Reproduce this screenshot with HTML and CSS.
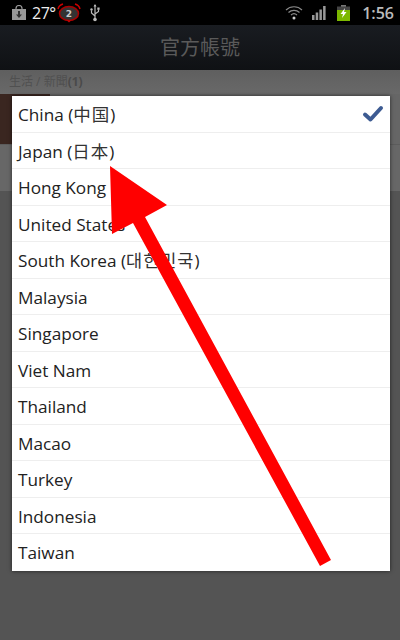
FILE: index.html
```html
<!DOCTYPE html>
<html lang="en">
<head>
    <meta charset="UTF-8">
    <meta name="viewport" content="width=device-width, initial-scale=1.0">
    <title>官方帳號</title>
    <link rel="stylesheet" href="styles.css">
</head>
<body>
    <div class="status-bar">
        <div class="status-left">
            <svg class="icon-bag" width="14" height="15" viewBox="0 0 14 15">
                <path d="M4 5V3.500a3 3 0 0 1 6 0V5" fill="none" stroke="#999" stroke-width="1.200"/>
                <rect x="0" y="4" width="14" height="11" fill="#999"/>
                <path d="M6 6h2v3.500h2L7 13 4 9.500h2z" fill="#333"/>
            </svg>
            <span class="temp">27°</span>
            <svg class="icon-alarm" width="24" height="20" viewBox="0 0 24 20">
                <path d="M1 6a7 7 0 0 1 5-5M23 6a7 7 0 0 0-5-5" fill="none" stroke="#c00" stroke-width="1.500"/>
                <ellipse cx="12" cy="10.500" rx="9.500" ry="7" fill="#333" stroke="#a00" stroke-width="1.500"/>
                <path d="M10 17.500h4l-2 2z" fill="#c00"/>
                <text x="12" y="14" class="alarm-num">2</text>
            </svg>
            <svg class="icon-usb" width="10" height="18" viewBox="0 0 10 18">
                <path d="M5 1v14M5 12L1.500 9V6.500M5 10l3.500-2.500V5.500" fill="none" stroke="#bbb" stroke-width="1.200"/>
                <circle cx="5" cy="15.500" r="1.800" fill="#bbb"/>
                <circle cx="1.500" cy="5.500" r="1.200" fill="#bbb"/>
                <rect x="7.300" y="3.500" width="2.300" height="2.300" fill="#bbb"/>
                <path d="M5 0l1.500 2.500h-3z" fill="#bbb"/>
            </svg>
        </div>
        <div class="status-right">
            <svg class="icon-wifi" width="18" height="15" viewBox="0 0 18 15">
                <path d="M1 5a11.500 11.500 0 0 1 16 0M3.500 7.500a8 8 0 0 1 11 0M6 10a4.500 4.500 0 0 1 6 0" fill="none" stroke="#8a8a8a" stroke-width="1.200"/>
                <circle cx="9" cy="13" r="1.500" fill="#ccc"/>
            </svg>
            <svg class="icon-signal" width="14" height="14" viewBox="0 0 14 14">
                <path d="M0 9h2.500v5H0zM3.700 6.500h2.500V14H3.700zM7.400 3.500h2.500V14H7.400zM11.100 0h2.500v14h-2.500z" fill="#999"/>
            </svg>
            <svg class="icon-battery" width="13" height="16" viewBox="0 0 13 16">
                <rect x="4" y="0" width="5" height="2" fill="#777"/>
                <rect x="0" y="1.500" width="13" height="14.500" fill="#444"/>
                <rect x="0" y="5" width="13" height="11" fill="#7cb800"/>
                <path d="M8 3L3.500 9h2.500L5 13l4.500-6H7z" fill="#fff"/>
            </svg>
            <span class="clock">1:56</span>
        </div>
    </div>

    <div class="action-bar">官方帳號</div>
    <div class="section-title">生活 / 新聞<b>(1)</b></div>
    <div class="bg-row">
        <div class="bg-thumb"></div>
    </div>
    <div class="bg-row-empty"></div>

    <ul class="dialog">
        <li>China (<span class="cjk">中国</span>)
            <svg class="check" width="22" height="18" viewBox="0 0 22 18">
                <path d="M3 9.500l5.500 5L19 3" fill="none" stroke="#3d5b92" stroke-width="4" stroke-linecap="round" stroke-linejoin="round"/>
            </svg>
        </li>
        <li>Japan (<span class="cjk">日本</span>)</li>
        <li>Hong Kong</li>
        <li>United States</li>
        <li>South Korea (<span class="cjk">대한민국</span>)</li>
        <li>Malaysia</li>
        <li>Singapore</li>
        <li>Viet Nam</li>
        <li>Thailand</li>
        <li>Macao</li>
        <li>Turkey</li>
        <li>Indonesia</li>
        <li>Taiwan</li>
    </ul>

    <!-- red arrow drawn over the screenshot -->
    <svg class="arrow" width="400" height="640" viewBox="0 0 400 640">
        <polygon points="110,166 167,205 145,217 331,560 320,566 133,223 112,234" fill="#ff0000"/>
    </svg>
</body>
</html>
```

FILE: styles.css
```css
html, body {
    margin: 0;
    padding: 0;
}
body {
    width: 400px;
    height: 640px;
    overflow: hidden;
    position: relative;
    background: #545454;
    font-family: "Open Sans", "Noto Sans CJK TC", sans-serif;
}
.status-bar {
    height: 25px;
    background: #000;
    display: flex;
    justify-content: space-between;
    align-items: center;
    box-sizing: border-box;
    padding: 0 6px 0 12px;
    color: #ddd;
}
.status-left,
.status-right {
    display: flex;
    align-items: center;
}
.temp {
    font-size: 16px;
    letter-spacing: -0.5px;
    margin-left: 6px;
    color: #eee;
}
.icon-alarm {
    margin-left: 1px;
}
.icon-usb {
    margin-left: 9px;
}
.alarm-num {
    font-family: "DejaVu Sans", sans-serif;
    font-size: 9px;
    font-weight: bold;
    fill: #ccc;
    text-anchor: middle;
}
.icon-signal {
    margin-left: 9px;
}
.icon-battery {
    margin-left: 11px;
}
.clock {
    font-size: 16px;
    font-weight: 600;
    margin-left: 12px;
    color: #bbb;
}
.action-bar {
    height: 45px;
    line-height: 46px;
    text-align: center;
    font-size: 20px;
    color: #5a5a5a;
    background: linear-gradient(#191c21, #0f1114);
}
.section-title {
    height: 24px;
    line-height: 24px;
    padding-left: 9px;
    font-size: 12px;
    color: #505050;
    background: linear-gradient(#5f5f5f, #696969);
}
.section-title b {
    color: #4a4a4a;
}
.bg-row {
    height: 50px;
    background: #666;
    border-bottom: 1px solid #5c5c5c;
}
.bg-thumb {
    width: 50px;
    height: 50px;
    background: #3a2620;
}
.bg-row-empty {
    height: 46px;
    background: #676767;
}
.dialog {
    position: absolute;
    top: 96px;
    left: 12px;
    width: 378px;
    margin: 0;
    padding: 0;
    list-style: none;
    background: #fff;
    box-shadow: 0 0 4px rgba(0, 0, 0, 0.6);
}
.dialog li {
    height: 36.5px;
    line-height: 38px;
    box-sizing: border-box;
    padding-left: 6px;
    font-size: 17.2px;
    color: #222;
    border-bottom: 1px solid #eee;
    position: relative;
    white-space: nowrap;
}
.dialog li:last-child {
    border-bottom: none;
}
.cjk {
    font-size: 17.5px;
    letter-spacing: 1px;
    line-height: 1;
    color: #333;
}
.check {
    position: absolute;
    top: 9px;
    right: 6px;
}
.arrow {
    position: absolute;
    top: 0;
    left: 0;
}
```
